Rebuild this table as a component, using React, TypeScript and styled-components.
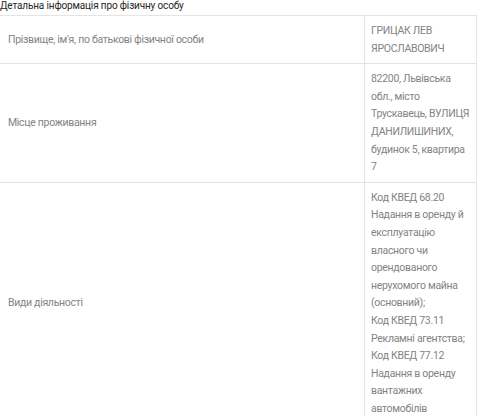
import React from "react";
import styled, { createGlobalStyle } from "styled-components";

const GlobalStyle = createGlobalStyle`
  html, body {
    margin: 0;
    padding: 0;
    background: #ffffff;
  }
  body {
    font-family: Roboto, "Noto Sans", sans-serif;
  }
`;

const rows: { label: string; value: string[] }[] = [
  {
    label: "Прізвище, ім'я, по батькові фізичної особи",
    value: ["ГРИЦАК ЛЕВ ЯРОСЛАВОВИЧ"],
  },
  {
    label: "Місце проживання",
    value: [
      "82200, Львівська обл., місто Трускавець, ВУЛИЦЯ ДАНИЛИШИНИХ, будинок 5, квартира 7",
    ],
  },
  {
    label: "Види діяльності",
    value: [
      "Код КВЕД 68.20 Надання в оренду й експлуатацію власного чи орендованого нерухомого майна (основний);",
      "Код КВЕД 73.11 Рекламні агентства;",
      "Код КВЕД 77.12 Надання в оренду вантажних автомобілів",
    ],
  },
];

const App: React.FC = () => {
  return (
    <Page>
      <GlobalStyle />
      <Title>Детальна інформація про фізичну особу</Title>
      <Table>
        {rows.map((row) => (
          <Row key={row.label}>
            <LabelCell>{row.label}</LabelCell>
            <ValueCell>
              {row.value.map((line) => (
                <ValueLine key={line}>{line}</ValueLine>
              ))}
            </ValueCell>
          </Row>
        ))}
      </Table>
    </Page>
  );
};

const Page = styled.div`
  width: 480px;
  height: 416px;
  overflow: hidden;
  background: #ffffff;
`;

const Title = styled.div`
  font-family: Roboto, "Noto Sans", sans-serif;
  font-size: 10px;
  letter-spacing: -0.15px;
  line-height: 12px;
  color: #262626;
  margin-bottom: 3px;
`;

const Table = styled.div`
  width: 477px;
  box-sizing: border-box;
  border-top: 1px solid #e4e4e4;
  border-right: 1px solid #e4e4e4;
`;

const Row = styled.div`
  display: grid;
  grid-template-columns: 364px 1fr;
  border-bottom: 1px solid #e4e4e4;
`;

const Cell = styled.div`
  box-sizing: border-box;
  font-family: Roboto, "Noto Sans", sans-serif;
  font-size: 10.5px;
  letter-spacing: -0.3px;
  line-height: 17.6px;
  color: #838383;
`;

const LabelCell = styled(Cell)`
  padding: 6px 8px;
  display: flex;
  align-items: center;
`;

const ValueCell = styled(Cell)`
  padding: 6px 5px 6px 6px;
  border-left: 1px solid #e4e4e4;
`;

const ValueLine = styled.div``;

export default App;
